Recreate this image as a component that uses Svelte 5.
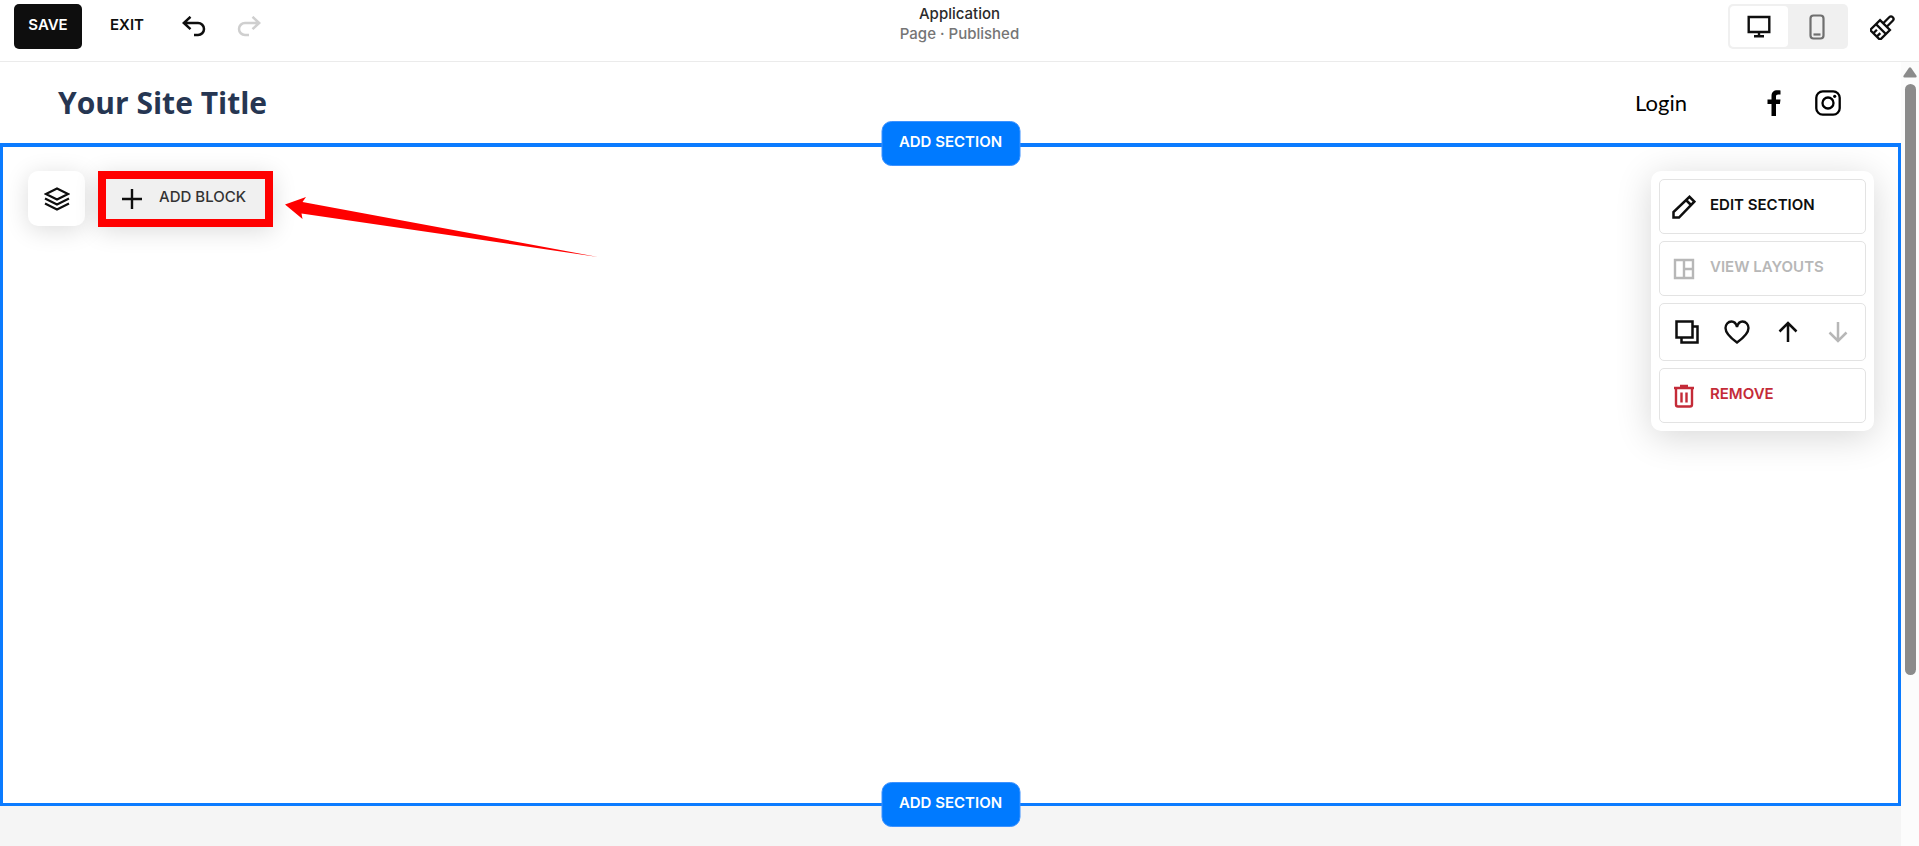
<script lang="ts">
	type Device = 'desktop' | 'mobile';

	let device = $state<Device>('desktop');
</script>

<div class="editor">
	<header class="toolbar">
		<div class="toolbar-left">
			<button class="save" type="button"><span class="label">Save</span></button>
			<button class="exit" type="button"><span class="label">Exit</span></button>
			<button class="icon-button" type="button" aria-label="Undo">
				<svg width="24" height="22" viewBox="0 0 24 22" fill="none" stroke="currentColor" stroke-width="2.5">
					<path d="M8.500 0.800 1.800 7l6.700 6.200M2.500 7H16a6 6 0 0 1 0 12h-4" />
				</svg>
			</button>
			<button class="icon-button" type="button" aria-label="Redo" disabled>
				<svg width="24" height="22" viewBox="0 0 24 22" fill="none" stroke="currentColor" stroke-width="2.5">
					<path d="M15.500 0.800 22.200 7l-6.700 6.200M21.500 7H8a6 6 0 0 0 0 12h4" />
				</svg>
			</button>
		</div>

		<div class="page-info">
			<strong>Application</strong>
			<span>Page · Published</span>
		</div>

		<div class="toolbar-right">
			<div class="devices" role="group" aria-label="Preview device">
				<button
					class:active={device === 'desktop'}
					onclick={() => (device = 'desktop')}
					type="button"
					aria-label="Desktop"
					aria-pressed={device === 'desktop'}
				>
					<svg width="24" height="24" viewBox="0 0 24 24" fill="none" stroke="currentColor" stroke-width="2.4">
						<path d="M1.700 2h20.600v15H1.700zM12 17v4M7 21.300h10" />
					</svg>
				</button>
				<button
					class:active={device === 'mobile'}
					onclick={() => (device = 'mobile')}
					type="button"
					aria-label="Mobile"
					aria-pressed={device === 'mobile'}
				>
					<svg width="16" height="26" viewBox="0 0 16 26" fill="none" stroke="currentColor" stroke-width="2.2">
						<rect x="1.500" y="1.500" width="13" height="23" rx="3" />
						<path d="M4.500 20.500h7" />
					</svg>
				</button>
			</div>
			<button class="icon-button" type="button" aria-label="Site styles">
				<svg width="26" height="26" viewBox="0 0 26 26" fill="none" stroke="currentColor" stroke-width="2.3">
					<g transform="translate(12.500 13.500) rotate(45)">
						<path d="M-2.500-3.500V-12a2.500 2.500 0 0 1 5 0v8.500" />
						<path d="M-7-3.500H7V10.500H-7zM-7 2.200H7M-2.400 10.500V5.500M2.400 10.500V5.500" />
					</g>
				</svg>
			</button>
		</div>
	</header>

	<div class="viewport">
		<main class="page">
			<div class="site-header">
				<a class="site-title" href="#home">Your Site Title</a>
				<nav class="site-nav">
					<a class="login" href="#login">Login</a>
					<div class="social">
						<a href="#facebook" aria-label="Facebook">
							<svg width="26" height="26" viewBox="0 0 26 26" fill="currentColor">
								<path d="M10.500 26V14H6.500V9.500h4V6.300C10.500 2.200 12.800.300 16.300.300c1.500 0 2.600.100 3.200.200v4h-2.300c-1.700 0-2.200.800-2.200 2.200v2.800h4.500L18.900 14H15v12z" />
							</svg>
						</a>
						<a href="#instagram" aria-label="Instagram">
							<svg width="26" height="26" viewBox="0 0 26 26" fill="none" stroke="currentColor" stroke-width="2.300">
								<rect x="1.300" y="1.300" width="23.400" height="23.400" rx="6.500" />
								<circle cx="13" cy="13" r="5.500" />
								<circle cx="19.700" cy="6.300" r="1.600" fill="currentColor" stroke="none" />
							</svg>
						</a>
					</div>
				</nav>
			</div>

			<section class="section">
				<button class="add-section at-top" type="button"><span class="label">Add Section</span></button>

				<div class="block-tools">
					<button class="layers" type="button" aria-label="Layers">
						<svg width="26" height="24" viewBox="0 0 26 24" fill="none" stroke="currentColor" stroke-width="2.2">
							<path d="M13 1.500 24 7l-11 5.500L2 7zM1 11.500l12 6 12-6M1 16.500l12 6 12-6" />
						</svg>
					</button>
					<div class="highlight">
						<button class="add-block" type="button">
							<svg width="20" height="20" viewBox="0 0 20 20" fill="none" stroke="#0e0e0e" stroke-width="2.400">
								<path d="M10 0v20M0 10h20" />
							</svg>
							<span class="label">Add Block</span>
						</button>
						<svg class="arrow" width="314" height="62" viewBox="0 0 314 62" fill="#f00">
							<path d="M0 8.500 21 1l-3.500 5L313 61 16.500 17.500l1 5.500z" />
						</svg>
					</div>
				</div>

				<div class="section-menu">
					<button class="item" type="button">
						<svg width="24" height="24" viewBox="0 0 24 24" fill="none" stroke="currentColor" stroke-width="2.500">
							<path d="M1.500 22.500v-5.500L17.500 1.800l4.800 4.800L7 22.500zM14 5l5 5" />
						</svg>
						<span class="label">Edit Section</span>
					</button>
					<button class="item" type="button" disabled>
						<svg width="24" height="24" viewBox="0 0 24 24" fill="none" stroke="currentColor" stroke-width="2.400">
							<path d="M3 3h18v18H3zM12 3v18M12 12h9" />
						</svg>
						<span class="label">View Layouts</span>
					</button>
					<div class="item actions">
						<button type="button" aria-label="Duplicate">
							<svg width="26" height="26" viewBox="0 0 26 26" fill="none" stroke="currentColor" stroke-width="2.500">
								<path d="M2.500 2.500h16v16h-16zM18.500 7.500h5v16h-16v-5" />
							</svg>
						</button>
						<button type="button" aria-label="Favorite">
							<svg width="26" height="26" viewBox="0 0 26 26" fill="none" stroke="currentColor" stroke-width="2.400">
								<path d="M13 8C12 4 10 2.500 7.500 2.500 4 2.500 1.500 5.500 1.500 9c0 5 4.500 9.500 11.500 14.500C20 18.500 24.500 14 24.500 9c0-3.500-2.500-6.500-6-6.500C16 2.500 14 4 13 8z" />
							</svg>
						</button>
						<button type="button" aria-label="Move up">
							<svg width="26" height="26" viewBox="0 0 26 26" fill="none" stroke="currentColor" stroke-width="2.500">
								<path d="M13 3.500V23M4.500 12.500 13 4l8.500 8.500" />
							</svg>
						</button>
						<button type="button" aria-label="Move down" disabled>
							<svg width="26" height="26" viewBox="0 0 26 26" fill="none" stroke="currentColor" stroke-width="2.500">
								<path d="M13 3v19.500M4.500 13.500 13 22l8.500-8.500" />
							</svg>
						</button>
					</div>
					<button class="item remove" type="button">
						<svg width="24" height="24" viewBox="0 0 24 24" fill="none" stroke="currentColor" stroke-width="2.400">
							<path d="M2 4h20M8 2h8" />
							<path d="M4 4v16.500a2 2 0 0 0 2 2h12a2 2 0 0 0 2-2V4M9.500 8.500v10M14.500 8.500v10" />
						</svg>
						<span class="label">Remove</span>
					</button>
				</div>

				<button class="add-section at-bottom" type="button"><span class="label">Add Section</span></button>
			</section>
		</main>

		<div class="scrollbar" aria-hidden="true">
			<svg width="14" height="11" viewBox="0 0 14 11" fill="#8b8b8b">
				<path d="M6 .800q1-1.200 2 0l5.500 8q.600 1.700-1 1.700h-11q-1.600 0-1-1.700z" />
			</svg>
			<div class="thumb"></div>
			<div class="rest"></div>
		</div>
	</div>
</div>

<style>
	:global(body) {
		background: #fff;
	}

	.editor {
		display: flex;
		flex-direction: column;
		min-height: 100vh;
		font-family: Inter, 'Liberation Sans', sans-serif;
		font-size: 15px;
		line-height: 20px;
		color: #0e0e0e;
	}

	button {
		display: flex;
		align-items: center;
		justify-content: center;
		padding: 0;
		border: 0;
		background: none;
		color: inherit;
		font: inherit;
		font-weight: 600;
		text-transform: uppercase;
		white-space: nowrap;
		cursor: pointer;
	}

	button:disabled {
		color: #b7b7b7;
		cursor: default;
	}

	svg {
		display: block;
		flex-shrink: 0;
	}

	a {
		color: inherit;
		text-decoration: none;
	}

	.label {
		padding-bottom: 4px;
	}

	/* Toolbar */
	.toolbar {
		display: grid;
		grid-template-columns: 1fr auto 1fr;
		padding: 4px 23px 12px 14px;
		border-bottom: 1px solid #ebebeb;
	}

	.toolbar-left,
	.toolbar-right {
		display: flex;
		align-items: center;
	}

	.toolbar-left {
		gap: 28px;
	}

	.toolbar-right {
		justify-content: flex-end;
		gap: 22px;
	}

	.save {
		width: 68px;
		height: 45px;
		border-radius: 5px;
		background: #0e0e0e;
		color: #fff;
	}

	.exit {
		margin-right: 10px;
	}

	.icon-button + .icon-button {
		margin-left: 3px;
	}

	.toolbar-left .icon-button:disabled {
		color: #cfcfcf;
	}

	.page-info {
		display: flex;
		flex-direction: column;
		align-items: center;
		margin-right: -9px;
		color: #757575;
		font-weight: 500;
	}

	.page-info strong {
		color: #2b2b2b;
		font-weight: 500;
	}

	.devices {
		display: grid;
		grid-template-columns: 1fr 1fr;
		box-sizing: border-box;
		width: 120px;
		height: 45px;
		padding: 2px;
		border-radius: 5px;
		background: #f0f0f0;
		color: #6f6f6f;
	}

	.devices button {
		border-radius: 4px;
	}

	.devices .active {
		background: #fff;
		color: #0e0e0e;
	}

	/* Site preview */
	.viewport {
		display: flex;
		flex: 1;
	}

	.page {
		display: flex;
		flex: 1;
		flex-direction: column;
		padding-bottom: 40px;
		background: #f5f5f5;
	}

	.site-header {
		display: flex;
		align-items: center;
		justify-content: space-between;
		height: 81px;
		padding: 0 60px 0 58px;
		background: #fff;
		font-family: Lato, sans-serif;
	}

	.site-title {
		color: #263652;
		font-family: 'Open Sans', sans-serif;
		font-size: 30px;
		font-weight: 700;
		line-height: 36px;
	}

	.site-nav {
		display: flex;
		align-items: center;
		gap: 74px;
		color: #000;
	}

	.login {
		font-size: 22px;
		line-height: 28px;
	}

	.social {
		display: flex;
		gap: 28px;
	}

	.section {
		position: relative;
		display: flex;
		flex: 1;
		align-items: flex-start;
		justify-content: space-between;
		padding: 24px 24px 24px 25px;
		border: 3px solid #0b7bff;
		border-top-width: 4px;
		background: #fff;
	}

	.add-section {
		position: absolute;
		left: 50%;
		width: 139px;
		height: 45px;
		border: 1px solid #3d92ff;
		border-radius: 10px;
		background: #007aff;
		color: #fff;
		transform: translateX(-50%);
	}

	.at-top {
		top: -26px;
	}

	.at-bottom {
		bottom: -24px;
	}

	.block-tools {
		display: flex;
		gap: 13px;
	}

	.layers {
		width: 57px;
		height: 55px;
		border-radius: 10px;
		background: #fff;
		box-shadow: 0 4px 24px rgba(0, 0, 0, 0.14);
	}

	.highlight {
		position: relative;
	}

	.add-block {
		gap: 17px;
		height: 56px;
		padding: 0 19px 0 16px;
		border: 8px solid #f00;
		background: #f0f0f0;
		box-shadow: 0 4px 24px rgba(0, 0, 0, 0.14);
		color: #333;
		font-weight: 500;
	}

	.arrow {
		position: absolute;
		top: 25px;
		left: calc(100% + 12px);
	}

	.section-menu {
		display: flex;
		flex-direction: column;
		gap: 7px;
		box-sizing: border-box;
		width: 223px;
		padding: 8px;
		border-radius: 10px;
		background: #fff;
		box-shadow: 0 6px 36px rgba(0, 0, 0, 0.16);
	}

	.item {
		justify-content: flex-start;
		gap: 14px;
		box-sizing: border-box;
		height: 55px;
		padding: 0 12px;
		border: 1px solid #e3e3e3;
		border-radius: 5px;
	}

	.actions {
		display: flex;
		align-items: center;
		justify-content: space-between;
		height: 58px;
		padding: 0 14px;
	}

	.remove {
		color: #c42b38;
	}

	/* Scrollbar */
	.scrollbar {
		display: flex;
		flex-direction: column;
		align-items: center;
		width: 18px;
		padding-top: 5px;
		background: #fcfcfc;
	}

	.thumb {
		flex: 591;
		width: 11px;
		margin-top: 6px;
		border-radius: 6px;
		background: #8b8b8b;
	}

	.rest {
		flex: 171;
	}
</style>
